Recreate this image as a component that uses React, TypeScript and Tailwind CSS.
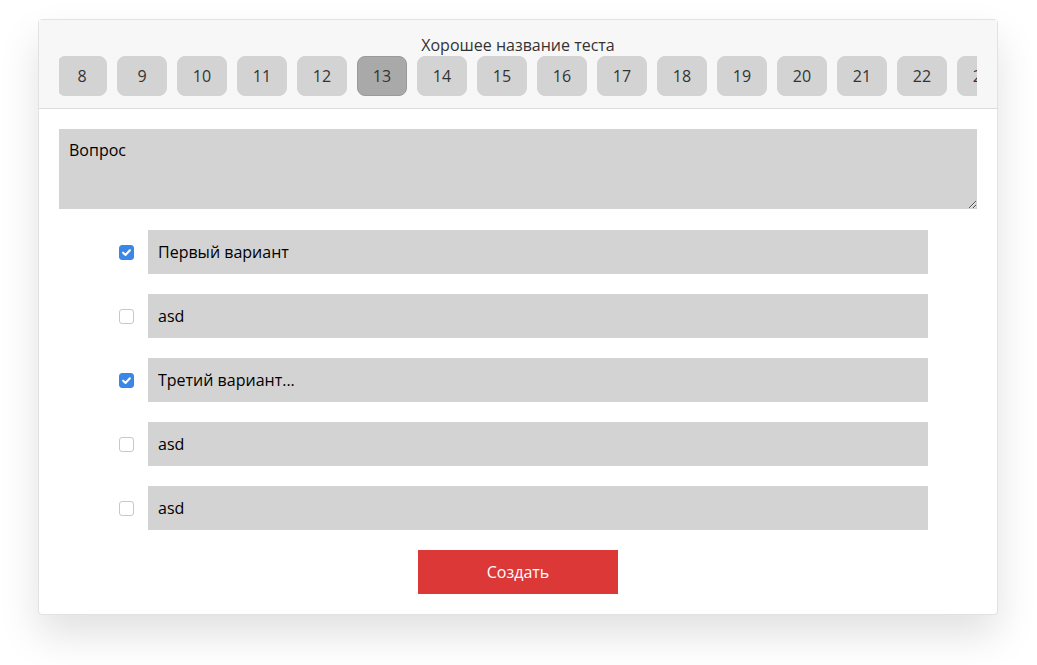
import { useLayoutEffect, useRef } from "react";

const pages = Array.from({ length: 30 }, (_, i) => i + 1);
const activePage = 13;

const options = [
  { text: "Первый вариант", checked: true },
  { text: "asd", checked: false },
  { text: "Третий вариант...", checked: true },
  { text: "asd", checked: false },
  { text: "asd", checked: false },
];

function Check({ checked }: { checked: boolean }) {
  return (
    <span
      className={`flex h-[15px] w-[15px] items-center justify-center rounded-[3px] border ${
        checked ? "border-[#3b87e8] bg-[#3b87e8]" : "border-[#c8c8c8] bg-white"
      }`}
    >
      {checked && (
        <svg width="11" height="11" viewBox="0 0 12 12" fill="none">
          <path
            d="M2.3 6.2 4.9 8.7 9.7 3.6"
            stroke="white"
            strokeWidth="2.2"
            strokeLinecap="round"
            strokeLinejoin="round"
          />
        </svg>
      )}
    </span>
  );
}

export default function App() {
  const listRef = useRef<HTMLDivElement>(null);

  useLayoutEffect(() => {
    if (listRef.current) listRef.current.scrollLeft = 422;
  }, []);

  return (
    <div
      className="min-h-screen bg-white pt-[19px]"
      style={{ fontFamily: '"Open Sans", "Noto Sans", sans-serif' }}
    >
      <div className="ml-[38px] w-[960px] rounded-[4px] border border-[#e2e2e2] bg-white shadow-[0_20px_40px_rgba(0,0,0,0.12)]">
        {/* Header */}
        <div className="border-b border-[#dcdcdc] bg-[#f7f7f7] px-5 pt-[14px] pb-[12px]">
          <div className="text-center text-base leading-[22px] text-[#333]">
            Хорошее название теста
          </div>
          <div ref={listRef} className="flex gap-[10px] overflow-hidden">
            {pages.map((p) => (
              <button
                key={p}
                className={`h-10 w-[50px] shrink-0 rounded-lg border text-base text-[#333] ${
                  p === activePage
                    ? "border-[#9a9a9a] bg-[#a9a9a9]"
                    : "border-[#d3d3d3] bg-[#d3d3d3]"
                }`}
              >
                {p}
              </button>
            ))}
          </div>
        </div>

        {/* Body */}
        <div className="flex flex-col items-center p-5">
          <textarea
            defaultValue="Вопрос"
            className="block h-20 w-full resize-y bg-[#d3d3d3] p-[10px] text-base leading-[22px] text-black outline-none"
          />

          <div className="mt-[21px] flex w-[820px] flex-col gap-5">
            {options.map((o, i) => (
              <div key={i} className="flex items-center">
                <label className="w-10 shrink-0 pl-[11px]">
                  <Check checked={o.checked} />
                </label>
                <input
                  type="text"
                  defaultValue={o.text}
                  className="h-11 flex-1 bg-[#d3d3d3] px-[10px] text-base text-black outline-none"
                />
              </div>
            ))}
          </div>

          <button className="mt-5 h-11 w-[200px] bg-[#dc3838] text-base text-white">
            Создать
          </button>
        </div>
      </div>
    </div>
  );
}
